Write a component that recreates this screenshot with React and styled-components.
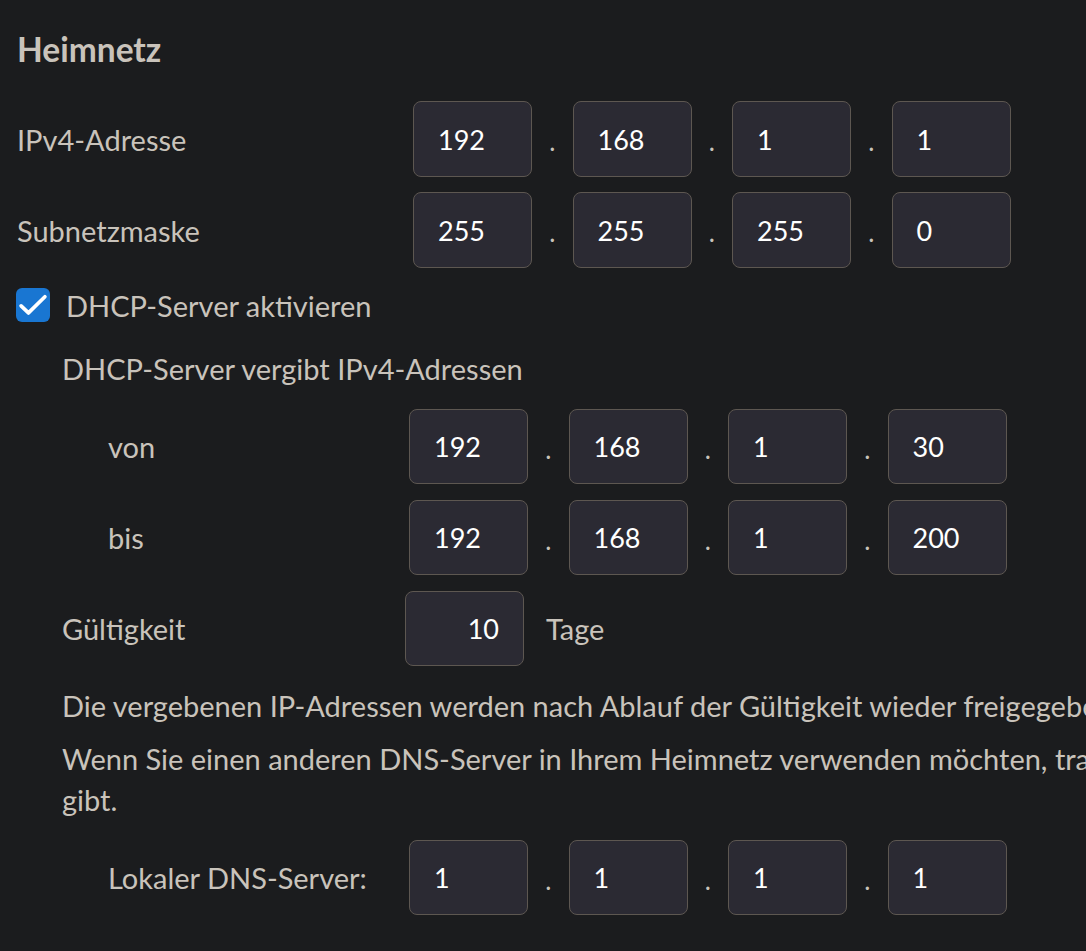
import styled, { createGlobalStyle } from 'styled-components';

const GlobalStyle = createGlobalStyle`
  html, body {
    margin: 0;
    background: #1b1c1e;
    overflow: hidden;
  }
  body {
    font-family: Lato, "Noto Sans", sans-serif;
    color: #c9c3bb;
  }
`;

const IpField = ({ parts, $h }) => (
  <IpGroup>
    {parts.map((part, i) => (
      <IpPart key={i}>
        {i > 0 && <Dot>.</Dot>}
        <Box $h={$h}>{part}</Box>
      </IpPart>
    ))}
  </IpGroup>
);

const App = () => {
  return (
    <>
      <GlobalStyle />
      <Page>
        <Heading>Heimnetz</Heading>

        <Row>
          <Label $width={396}>IPv4-Adresse</Label>
          <IpField parts={['192', '168', '1', '1']} />
        </Row>
        <Row $gap={15}>
          <Label $width={396}>Subnetzmaske</Label>
          <IpField parts={['255', '255', '255', '0']} />
        </Row>

        <CheckRow>
          <Checkbox>
            <svg width="34" height="34" viewBox="0 0 24 24" fill="none">
              <path d="M3.6 12.6l5.2 5L20.4 6.2" stroke="#fff" strokeWidth="2.6" strokeLinecap="round" strokeLinejoin="round" />
            </svg>
          </Checkbox>
          <span>DHCP-Server aktivieren</span>
        </CheckRow>

        <SubBlock>
          <SubHeading>DHCP-Server vergibt IPv4-Adressen</SubHeading>
          <Row $gap={20} $h={75}>
            <Label $width={347} $indent={46}>von</Label>
            <IpField parts={['192', '168', '1', '30']} $h={75} />
          </Row>
          <Row $gap={16} $h={75}>
            <Label $width={347} $indent={46}>bis</Label>
            <IpField parts={['192', '168', '1', '200']} $h={75} />
          </Row>
          <Row $gap={16} $h={75}>
            <Label $width={343}>Gültigkeit</Label>
            <Box $align="right" $h={75}>10</Box>
            <Unit>Tage</Unit>
          </Row>

          <Text $gap={19}>
            Die vergebenen IP-Adressen werden nach Ablauf der Gültigkeit wieder freigegeben.
          </Text>
          <Text $gap={12}>
            Wenn Sie einen anderen DNS-Server in Ihrem Heimnetz verwenden möchten, tragen Sie hier
            dessen IPv4-Adresse ein, die der DHCP-Server an die Geräte im Heimnetz weiter
            <br />
            gibt.
          </Text>

          <Row $gap={20} $h={75}>
            <Label $width={347} $indent={46}>Lokaler DNS-Server:</Label>
            <IpField parts={['1', '1', '1', '1']} $h={75} />
          </Row>
        </SubBlock>
      </Page>
    </>
  );
};

const Page = styled.main`
  padding: 29px 0 0 17px;
  font-size: 29px;
`;

const Heading = styled.h2`
  margin: 0 0 32px;
  height: 40px;
  line-height: 40px;
  font-size: 33.5px;
  font-weight: 700;
  color: #c9c3bb;
`;

const Row = styled.div`
  display: flex;
  align-items: center;
  height: ${({ $h }) => $h || 76}px;
  margin-top: ${({ $gap }) => $gap || 0}px;
`;

const Label = styled.div`
  flex: none;
  box-sizing: border-box;
  width: ${({ $width }) => $width}px;
  padding-left: ${({ $indent }) => $indent || 0}px;
  white-space: nowrap;
`;

const IpGroup = styled.div`
  display: flex;
  align-items: center;
`;

const IpPart = styled.div`
  display: flex;
  align-items: center;
`;

const Dot = styled.span`
  width: 40.5px;
  text-align: center;
  color: #c9c3bb;
  font-size: 26px;
  padding-top: 4px;
`;

const Box = styled.div`
  box-sizing: border-box;
  width: 119px;
  height: ${({ $h }) => $h || 76}px;
  padding: 0 24px;
  display: flex;
  align-items: center;
  justify-content: ${({ $align }) => ($align === 'right' ? 'flex-end' : 'flex-start')};
  background: #2b2a33;
  border: 1px solid #5d5751;
  border-radius: 8px;
  color: #ffffff;
  font-size: 27px;
`;

const Unit = styled.span`
  margin-left: 22px;
`;

const CheckRow = styled.label`
  display: flex;
  align-items: center;
  gap: 16px;
  height: 34px;
  margin: 20px 0 0 -1px;
`;

const Checkbox = styled.span`
  width: 34px;
  height: 34px;
  border-radius: 6px;
  background: #1976d2;
  display: flex;
  align-items: center;
  justify-content: center;
`;

const SubBlock = styled.section`
  padding-left: 45px;
`;

const SubHeading = styled.div`
  margin-top: 27px;
  height: 40px;
  line-height: 40px;
`;

const Text = styled.p`
  margin: ${({ $gap }) => $gap}px 0 0;
  line-height: 41px;
  white-space: nowrap;
`;

export default App;
